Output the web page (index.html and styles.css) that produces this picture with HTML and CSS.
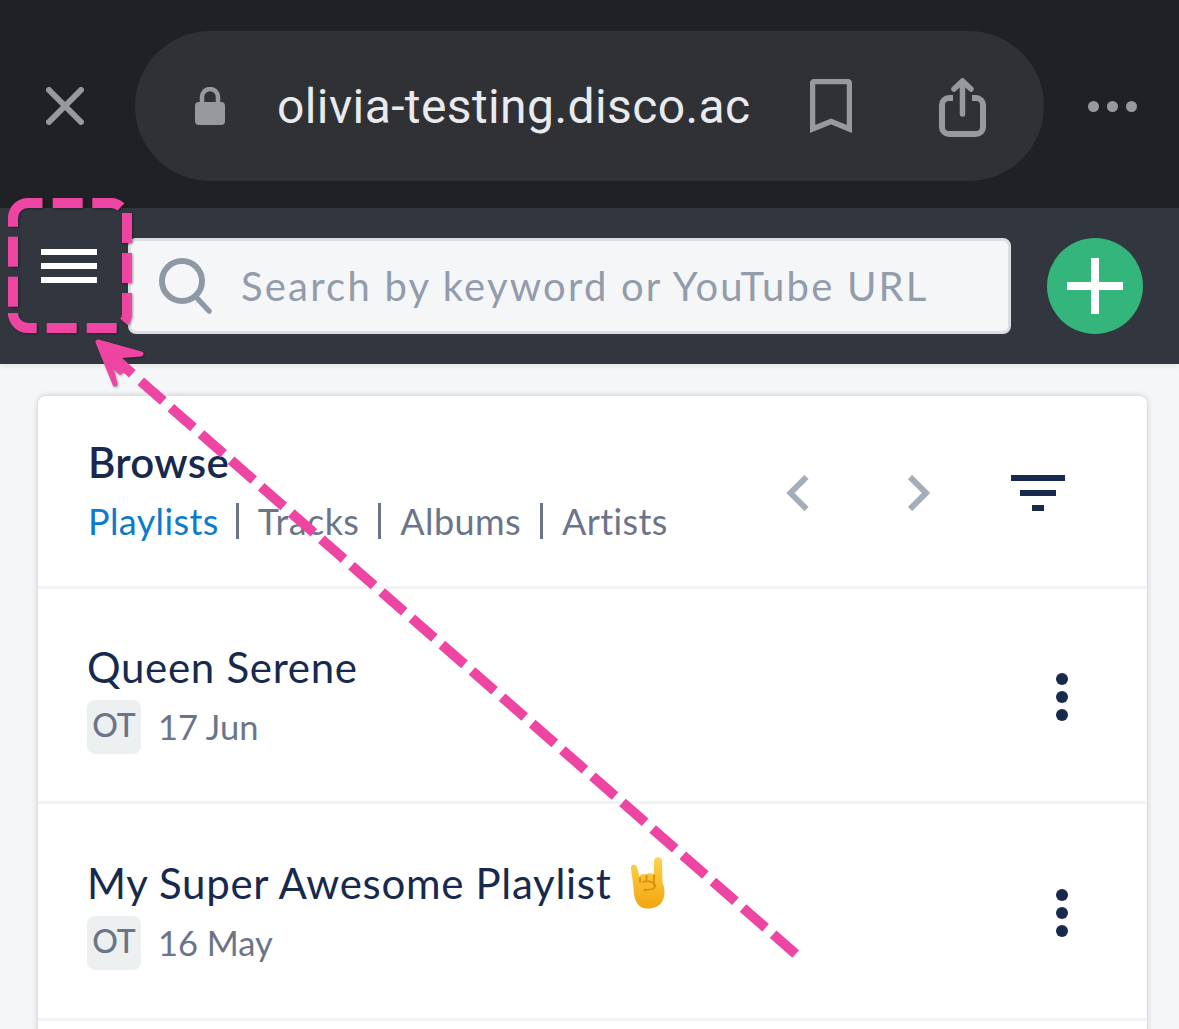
FILE: index.html
```html
<!DOCTYPE html>
<html lang="en">
<head>
    <meta charset="UTF-8">
    <meta name="viewport" content="width=device-width, initial-scale=1.0">
    <title>Browse</title>
    <link rel="stylesheet" href="styles.css">
</head>
<body>

    <div class="browser-bar">
        <svg class="close-icon" width="38" height="38" viewBox="0 0 38 38"><path d="M3 3L35 35M35 3L3 35" fill="none" stroke="#97999e" stroke-width="6" stroke-linecap="round"/></svg>
        <div class="url-pill">
            <svg class="lock-icon" width="30" height="38" viewBox="0 0 30 38"><path d="M7 17V10a8 8 0 0 1 16 0v7" fill="none" stroke="#97999e" stroke-width="4.5"/><rect x="0" y="15" width="30" height="23" rx="4" fill="#97999e"/></svg>
            <span class="url-text">olivia-testing.disco.ac</span>
            <svg class="bookmark-icon" width="42" height="54" viewBox="0 0 42 54"><path d="M2.500 50V4.500a2 2 0 0 1 2-2h33a2 2 0 0 1 2 2V50L21 42.500Z" fill="none" stroke="#97999e" stroke-width="5.500"/></svg>
            <svg class="share-icon" width="48" height="59" viewBox="0 0 48 59"><path d="M14 20H10a7 7 0 0 0-7 7v22a7 7 0 0 0 7 7h27a7 7 0 0 0 7-7V27a7 7 0 0 0-7-7h-4" fill="none" stroke="#97999e" stroke-width="6"/><path d="M23.500 36V3M15 11L23.500 3L32 11" fill="none" stroke="#97999e" stroke-width="5.500" stroke-linecap="round" stroke-linejoin="round"/></svg>
        </div>
        <div class="more-dots"><i></i><i></i><i></i></div>
    </div>

    <div class="app-bar">
        <div class="menu-btn"><i></i><i></i><i></i></div>
        <div class="search-box">
            <svg class="search-icon" width="54" height="56" viewBox="0 0 54 56"><circle cx="23" cy="23" r="20" fill="none" stroke="#8f99a6" stroke-width="6"/><path d="M37 39L50 53" fill="none" stroke="#8f99a6" stroke-width="5.500" stroke-linecap="round"/></svg>
            <span class="search-text">Search by keyword or YouTube URL</span>
        </div>
        <div class="add-btn"><span class="plus-h"></span><span class="plus-v"></span></div>
    </div>

    <div class="page">
        <div class="card">
            <div class="browse-head">
                <div class="browse-title">
                    <h1>Browse</h1>
                    <div class="tabs">
                        <a class="tab active">Playlists</a>
                        <a class="tab">Tracks</a>
                        <a class="tab">Albums</a>
                        <a class="tab">Artists</a>
                    </div>
                </div>
                <div class="browse-tools">
                    <svg class="chevron" width="23" height="36" viewBox="0 0 23 36"><path d="M20.500 2L4.500 18L20.500 34" fill="none" stroke="#a6adba" stroke-width="6"/></svg>
                    <svg class="chevron next" width="23" height="36" viewBox="0 0 23 36"><path d="M2 2L18 18L2 34" fill="none" stroke="#a6adba" stroke-width="6"/></svg>
                    <div class="filter-icon"><i></i><i></i><i></i></div>
                </div>
            </div>

            <div class="row">
                <div>
                    <div class="row-title">Queen Serene</div>
                    <div class="row-meta"><span class="avatar">OT</span><span class="date">17 Jun</span></div>
                </div>
                <div class="kebab"><i></i><i></i><i></i></div>
            </div>

            <div class="row">
                <div>
                    <div class="row-title">My Super Awesome Playlist<svg class="emoji" width="36" height="52" viewBox="0 0 36 52">
                        <defs><linearGradient id="hand" x1="0" y1="0" x2="0" y2="1"><stop offset="0" stop-color="#ffd34d"/><stop offset="1" stop-color="#f2a50e"/></linearGradient></defs>
                        <path d="M1 12C0 8 5 6 7 10L9.500 20C10 17 14 16 16 18C17 15.500 22 15.500 24 18L24 4C24 -1 32 -1 32 4L32.500 26C35 30 35 38 33 43C30 50 22 52 16 51.500C9 51 5 45 4 37C3.500 30 2.500 22 1 12Z" fill="url(#hand)"/>
                        <path d="M10 21V25M16.500 18.500V24M24 18V28M13 25C18 23 24 25 25 28C26 32 20 33 14 33" fill="none" stroke="#d98f0c" stroke-width="1.800" stroke-linecap="round"/>
                    </svg></div>
                    <div class="row-meta"><span class="avatar">OT</span><span class="date">16 May</span></div>
                </div>
                <div class="kebab"><i></i><i></i><i></i></div>
            </div>

            <div class="row"></div>
        </div>
    </div>

    <!-- pink annotation drawn on top of the screenshot -->
    <svg class="annotation" width="1179" height="1029" viewBox="0 0 1179 1029">
        <g class="annotation-box" fill="none" stroke="#ee44a2" stroke-width="10">
            <path d="M13 226.700V218a15 15 0 0 1 15-15H42.500"/>
            <path d="M52.700 203H82.700"/>
            <path d="M92.300 203H110a14 14 0 0 1 11 4"/>
            <path d="M127 213V243"/>
            <path d="M127 253V283"/>
            <path d="M127 293V313a12 12 0 0 1-3 9"/>
            <path d="M116.700 328H86.700"/>
            <path d="M76.700 328H46.700"/>
            <path d="M36.700 328H28a15 15 0 0 1-15-15V316.700"/>
            <path d="M13 306.700V276.700"/>
            <path d="M13 266.700V236.700"/>
        </g>
        <path class="annotation-box" d="M98 342L141 354L116 356L126 366L120 372L109 361L115 384Z" fill="#ee44a2" stroke="#ee44a2" stroke-width="5" stroke-linejoin="round"/>
        <path d="M132.300 373.700L110 354" fill="none" stroke="#ee44a2" stroke-width="10"/>
        <path d="M795.700 954L140.700 381.300" fill="none" stroke="#ee44a2" stroke-width="10" stroke-dasharray="30 10"/>
    </svg>

</body>
</html>
```

FILE: styles.css
```css
* {
    box-sizing: border-box;
}

html, body {
    height: 1029px;
    overflow: hidden;
}

body {
    margin: 0;
    position: relative;
    background-color: #f5f6f8;
    font-family: "Lato", "Noto Sans", sans-serif;
}

i {
    display: block;
}

.browser-bar {
    height: 208px;
    background-color: #202124;
    display: flex;
    align-items: center;
    padding: 4px 41px 0 46px;
}

.close-icon {
    flex: none;
    margin-right: 51px;
}

.url-pill {
    flex: none;
    width: 909px;
    height: 150px;
    border-radius: 75px;
    background-color: #303135;
    display: flex;
    align-items: center;
    padding-left: 60px;
}

.lock-icon {
    flex: none;
    margin-right: 52px;
}

.url-text {
    width: 533px;
    font-family: "Roboto", sans-serif;
    font-size: 48px;
    letter-spacing: 0.4px;
    color: #e8eaed;
    white-space: nowrap;
}

.share-icon {
    margin-left: 87px;
    margin-top: 3px;
}

.bookmark-icon {
    flex: none;
}

.more-dots {
    display: flex;
    gap: 8px;
    margin-left: 44px;
}

.more-dots i {
    width: 11px;
    height: 11px;
    border-radius: 50%;
    background-color: #97999e;
}

.app-bar {
    position: relative;
    height: 156px;
    background-color: #31363f;
    box-shadow: 0 2px 6px rgba(0, 0, 0, 0.08);
    display: flex;
    align-items: center;
    padding: 0 36px 0 41px;
}

.menu-btn {
    width: 56px;
    margin-right: 31px;
    margin-top: -40px;
    display: flex;
    flex-direction: column;
    gap: 7.700px;
}

.menu-btn i {
    height: 6px;
    background-color: #fff;
}

.search-box {
    width: 883px;
    height: 96px;
    background-color: #f5f6f8;
    border: 3px solid #dcdde0;
    border-radius: 8px;
    display: flex;
    align-items: center;
    padding-left: 28px;
}

.search-text {
    margin-left: 28px;
    font-size: 40px;
    letter-spacing: 2.200px;
    color: #929cab;
    white-space: nowrap;
}

.add-btn {
    position: relative;
    width: 96px;
    height: 96px;
    margin-left: 36px;
    border-radius: 50%;
    background-color: #33b57c;
}

.plus-h, .plus-v {
    position: absolute;
    background-color: #fff;
}

.plus-h {
    left: 20px;
    top: 44px;
    width: 56px;
    height: 8px;
}

.plus-v {
    left: 44px;
    top: 20px;
    width: 8px;
    height: 56px;
}

.page {
    padding: 32px 32px 0 38px;
}

.card {
    background-color: #fff;
    border-radius: 8px 8px 0 0;
    box-shadow: 0px 0px 6px rgba(0, 0, 0, 0.2);
}

.browse-head {
    height: 193px;
    border-bottom: 3px solid #f2f3f6;
    display: flex;
    justify-content: space-between;
    padding: 39px 82px 0 50px;
}

h1 {
    margin: 0 0 14px;
    font-size: 42px;
    font-weight: 600;
    line-height: 54px;
    letter-spacing: 0.300px;
    color: #172a4e;
}

.tabs {
    display: flex;
    font-size: 36px;
    line-height: 36px;
    letter-spacing: 0.400px;
}

.tab {
    padding: 0 19px;
    border-left: 3px solid #6b7489;
    color: #6b7489;
}

.tab:first-child {
    padding-left: 0;
    padding-right: 17px;
    border-left: 0;
}

.tab.active {
    color: #0a7ccb;
}

.browse-tools {
    display: flex;
    align-items: flex-start;
    padding-top: 40px;
}

.chevron.next {
    margin-left: 99px;
}

.filter-icon {
    width: 54px;
    margin-left: 80px;
    display: flex;
    flex-direction: column;
    align-items: center;
    gap: 9px;
}

.filter-icon i {
    height: 6px;
    background-color: #172a4e;
}

.filter-icon i:nth-child(1) {
    width: 54px;
}

.filter-icon i:nth-child(2) {
    width: 36px;
}

.filter-icon i:nth-child(3) {
    width: 12px;
}

.row {
    height: 215px;
    border-bottom: 3px solid #f2f3f6;
    display: flex;
    justify-content: space-between;
    align-items: center;
    padding: 3px 79px 0 49px;
}

.row:nth-child(3) {
    height: 217px;
}

.row-title {
    font-size: 42px;
    line-height: 54px;
    letter-spacing: 0.700px;
    color: #172a4e;
    white-space: nowrap;
}

.emoji {
    margin-left: 19px;
    vertical-align: -10px;
}

.row-meta {
    display: flex;
    align-items: center;
    margin-top: 6px;
}

.avatar {
    width: 54px;
    height: 54px;
    border-radius: 8px;
    background-color: #edf0f1;
    color: #6b7489;
    font-size: 32px;
    font-weight: 500;
    text-align: center;
    line-height: 50px;
}

.date {
    margin-left: 17px;
    font-size: 34.500px;
    color: #6b7489;
}

.kebab {
    display: flex;
    flex-direction: column;
    gap: 6px;
}

.kebab i {
    width: 12px;
    height: 12px;
    border-radius: 50%;
    background-color: #172a4e;
}

.annotation {
    position: absolute;
    left: 0;
    top: 0;
    pointer-events: none;
}

.annotation-box {
    filter: drop-shadow(1px 1px 1px rgba(0, 0, 0, 0.35));
}
```
